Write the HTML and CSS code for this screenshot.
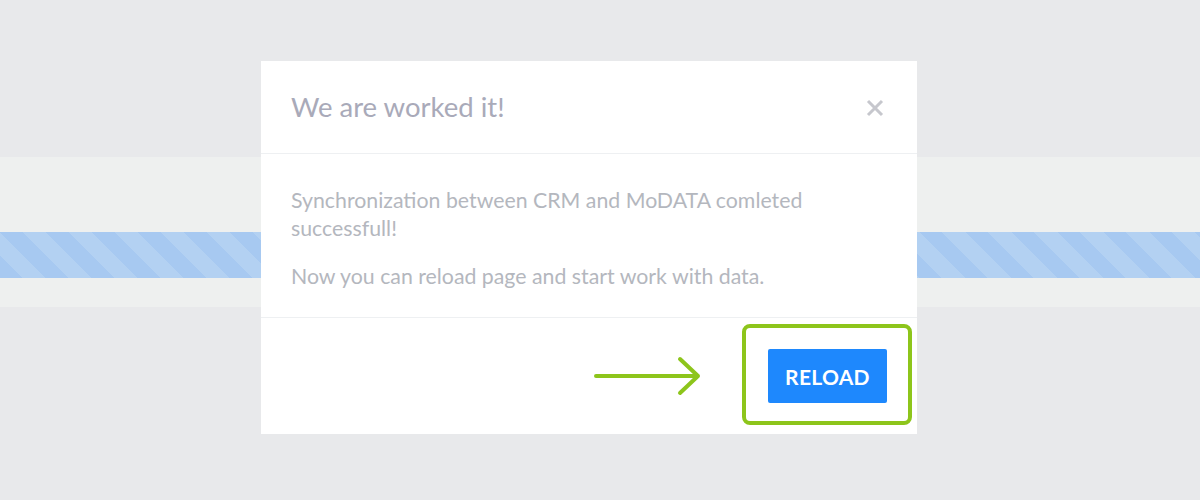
FILE: index.html
```html
<!DOCTYPE html>
<html lang="en">
<head>
    <meta charset="UTF-8">
    <meta name="viewport" content="width=device-width, initial-scale=1.0">
    <title>Synchronization</title>
    <link rel="stylesheet" href="styles.css">
</head>
<body>
    <div class="page">
        <div class="top-area"></div>
        <div class="sync-band">
            <div class="progress"></div>
        </div>
        <div class="bottom-area"></div>
    </div>

    <div class="modal">
        <div class="modal-header">
            <h2 class="modal-title">We are worked it!</h2>
            <span class="modal-close">
                <svg width="18" height="18" viewBox="0 0 18 18">
                    <path d="M2 2 L16 16 M16 2 L2 16" stroke="#c6c7cd" stroke-width="3" fill="none"/>
                </svg>
            </span>
        </div>
        <div class="modal-body">
            <p>Synchronization between CRM and MoDATA comleted successfull!</p>
            <p>Now you can reload page and start work with data.</p>
        </div>
        <div class="modal-footer">
            <svg class="hint-arrow" width="110" height="40" viewBox="0 0 110 40">
                <path d="M2 20 H104 M86 3 L104 20 L86 37" stroke="#8dc51b" stroke-width="4" stroke-linecap="round" stroke-linejoin="round" fill="none"/>
            </svg>
            <div class="button-wrap">
                <button class="btn-reload">RELOAD</button>
                <span class="highlight"></span>
            </div>
        </div>
    </div>
</body>
</html>
```

FILE: styles.css
```css
body {
    margin: 0;
    font-family: Lato, "Open Sans", sans-serif;
    background-color: #e8e9eb;
    height: 500px;
    overflow: hidden;
}
.page {
    display: flex;
    flex-direction: column;
}
.top-area {
    height: 157px;
}
.sync-band {
    height: 150px;
    background-color: #eef0ef;
    padding-top: 75px;
    box-sizing: border-box;
}
.progress {
    height: 46px;
    background: repeating-linear-gradient(45deg, #a7c9f1 0, #a7c9f1 16px, #b3d1f2 16px, #b3d1f2 32.5px);
}
.modal {
    position: absolute;
    top: 61px;
    left: 261px;
    width: 656px;
    background-color: #fff;
}
.modal-header {
    display: flex;
    justify-content: space-between;
    align-items: center;
    padding: 30px 33px 30px 30px;
    border-bottom: 1px solid #eef0f2;
}
.modal-title {
    margin: 0;
    font-size: 27.5px;
    font-weight: normal;
    line-height: 32px;
    color: #a9aab9;
}
.modal-close {
    display: flex;
    margin-top: 1px;
}
.modal-body {
    padding: 32px 30px 27px;
    border-bottom: 1px solid #eef0f2;
}
.modal-body p {
    margin: 0 0 20px;
    font-size: 21.3px;
    line-height: 28px;
    color: #b4b7be;
}
.modal-body p:last-child {
    margin-bottom: 0;
}
.modal-footer {
    display: flex;
    justify-content: flex-end;
    align-items: center;
    padding: 31px 30px 31px;
}
.hint-arrow {
    margin-right: 64px;
}
.button-wrap {
    position: relative;
    display: flex;
}
.btn-reload {
    width: 119px;
    height: 54px;
    border: none;
    border-radius: 2px;
    background-color: #1e88fd;
    color: #fff;
    font-family: Lato, sans-serif;
    font-size: 21px;
    font-weight: bold;
    letter-spacing: 0.3px;
    cursor: pointer;
}
.highlight {
    position: absolute;
    top: -25px;
    left: -26px;
    right: -25px;
    bottom: -22px;
    border: 4px solid #8dc51b;
    border-radius: 8px;
}
```
